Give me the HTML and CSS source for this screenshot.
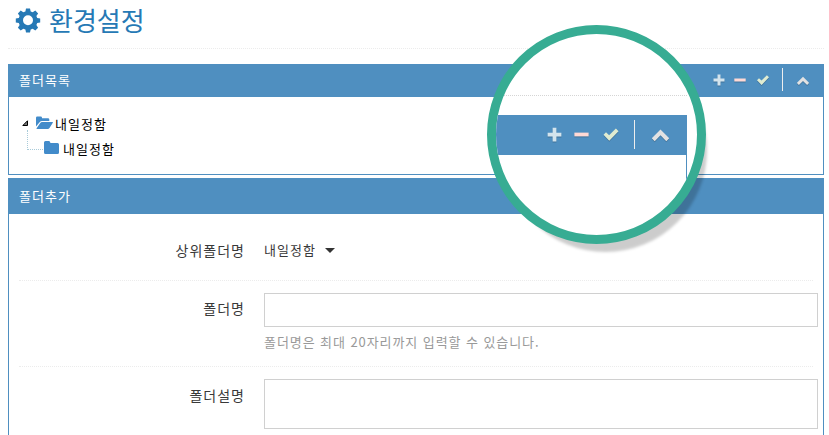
FILE: index.html
```html
<!DOCTYPE html>
<html lang="ko">
<head>
<meta charset="utf-8">
<title>환경설정</title>
<link rel="stylesheet" href="styles.css">
</head>
<body>
<svg class="defs" aria-hidden="true">
  <symbol id="plus" viewBox="0 0 12 12"><path d="M4.500 0.500h3v4h4v3h-4v4h-3v-4h-4v-3h4z"/></symbol>
  <symbol id="minus" viewBox="0 0 12 12"><path d="M0.300 4.500h11.400v3H0.300z"/></symbol>
  <symbol id="check" viewBox="0 0 12 12"><path d="M0 6.200l2-2 2.500 2.300L9.900 1.200 12 3.300 4.600 10.900z"/></symbol>
  <symbol id="up" viewBox="0 0 12 12"><path d="M6 1.700l6.200 6.200-2.100 2.100L6 5.900 1.900 10l-2.100-2.100z"/></symbol>
</svg>
<header class="title">
  <svg class="cog" viewBox="0 0 24 24"><path fill-rule="evenodd" d="M10 0.500h4l.7 3 2 .8 2.600-1.700 2.800 2.800-1.700 2.600.8 2 3 .6v3.800l-3 .7-.8 2 1.700 2.600-2.800 2.800-2.600-1.700-2 .8-.7 3h-4l-.6-3-2.100-.8-2.600 1.700-2.800-2.800 1.700-2.600-.8-2-3-.7v-3.800l3-.6.8-2-1.700-2.600 2.800-2.800 2.600 1.700 2.100-.8zM12 7.200a5 5 0 1 0 0 10 5 5 0 0 0 0-10z"/></svg>
  <h1>환경설정</h1>
</header>
<section class="panel list">
  <div class="bar">
    <h2>폴더목록</h2>
    <div class="tools">
      <svg class="plus"><use href="#plus"/></svg>
      <svg class="minus"><use href="#minus"/></svg>
      <svg class="check"><use href="#check"/></svg>
      <i class="sep"></i>
      <svg class="up"><use href="#up"/></svg>
    </div>
  </div>
  <div class="tree">
    <div class="node">
      <svg class="arrow" viewBox="0 0 6 6"><path d="M5.500.8v4.700H.8z"/></svg>
      <svg class="open" viewBox="0 0 17 14"><path d="M0 10.500V1.800Q0 .5 1.300.5h3.400Q6 .5 6 1.800v.4h6q1.300 0 1.300 1.300V5H6Q4.600 5 3.600 6.200z"/><path d="M6 6h10.500q.8 0 .3.800L13.500 12q-.6 1-1.800 1H1q-.9 0-.4-.8L4.300 7Q5 6 6 6z"/></svg>
      <span>내일정함</span>
    </div>
    <div class="node child">
      <i class="branch"></i>
      <svg class="folder" viewBox="0 0 15 13"><path d="M0 11.500V1.500Q0 0 1.500 0h3.300q1.500 0 1.500 1.500V2h7.200Q15 2 15 3.500v8q0 1.500-1.500 1.500h-12Q0 13 0 11.500z"/></svg>
      <span>내일정함</span>
    </div>
  </div>
</section>
<section class="panel add">
  <div class="bar"><h2>폴더추가</h2></div>
  <form class="form">
    <div class="row parent">
      <label>상위폴더명</label>
      <div class="select">내일정함<i class="caret"></i></div>
    </div>
    <div class="row name">
      <label>폴더명</label>
      <div class="field"><div class="input"></div><p>폴더명은 최대 20자리까지 입력할 수 있습니다.</p></div>
    </div>
    <div class="row desc">
      <label>폴더설명</label>
      <div class="field"><div class="input tall"></div></div>
    </div>
  </form>
</section>
<div class="lens">
  <div class="view">
    <div class="rule"></div>
    <div class="bar">
      <div class="tools">
        <svg class="plus"><use href="#plus"/></svg>
        <svg class="minus"><use href="#minus"/></svg>
        <svg class="check"><use href="#check"/></svg>
        <i class="sep"></i>
        <svg class="up"><use href="#up"/></svg>
      </div>
    </div>
    <div class="body"></div>
  </div>
</div>
</body>
</html>
```
FILE: styles.css
```css
* { box-sizing: border-box; }
html { overflow: hidden; }
body {
  margin: 0;
  padding: 0 5px 0 8px;
  height: 435px;
  overflow: hidden;
  position: relative;
  background: #fff;
  color: #000;
  font: 13px/18px "Noto Sans CJK KR", sans-serif;
  letter-spacing: 1px;
}
h1, h2, p { margin: 0; font-weight: 400; }
svg { display: block; flex: none; overflow: visible; }
.defs { position: absolute; width: 0; height: 0; }

.title {
  display: flex;
  height: 49px;
  padding: 8px 0 0 8px;
  border-bottom: 1px dotted #ececec;
  color: #2679b5;
}
.cog { width: 24px; height: 24px; fill: #2679b5; }
.title h1 { margin: -1px 0 0 9px; font-size: 26px; line-height: 26px; letter-spacing: 0; }

.panel { border: 1px solid #4f8fc0; border-top: 0; }
.list { height: 111px; margin-top: 15px; }
.add { height: 270px; margin-top: 3px; }
.bar {
  display: flex;
  justify-content: space-between;
  align-items: center;
  height: 33px;
  padding-left: 10px;
  background: #4f8fc0;
}
.add .bar { height: 36px; }
.bar h2 { padding-bottom: 1px; color: #fff; font-size: 13px; }

.tools { display: flex; align-items: center; }
.tools svg { width: 12px; height: 12px; filter: drop-shadow(0 1px 0 rgba(0, 0, 0, .2)); }
.plus { fill: #d3e4ed; }
.minus { fill: #ffd9d5; margin-left: 9px; }
.check { fill: #e0ecd1; margin-left: 11px; }
.sep { width: 1px; height: 23px; margin-left: 13px; background: #eee; }
.up { fill: #e2e2e2; margin-left: 14px; }
.list .tools { padding: 0 14px 2px 0; }
.list .up { margin-top: 3px; }

.tree { padding: 15px 0 0 13px; }
.node { display: flex; align-items: center; height: 25px; }
.node span { padding-bottom: 2px; }
.arrow { width: 6px; height: 6px; margin-bottom: 4px; stroke: #000; stroke-width: 1; fill: #777; }
.open { width: 17px; height: 14px; margin: 0 2px 4px 8px; fill: #428bca; }
.folder { width: 15px; height: 13px; margin: 0 4px 4px 0; fill: #428bca; }
.branch {
  width: 16px;
  height: 20px;
  margin: -20px 1px 0 5px;
  border: dotted #a9cbd9;
  border-width: 0 0 1px 1px;
}

.form { padding: 0 5px 0 10px; color: #393939; }
.row { display: flex; margin-right: 5px; }
.row + .row { border-top: 1px dotted #ececec; }
.row label { width: 226px; margin-right: 19px; text-align: right; font-size: 14px; }
.parent { height: 66px; padding-top: 27px; }
.name { height: 86px; padding-top: 12px; }
.desc { padding-top: 12px; }
.name label { padding-top: 6px; }
.desc label { padding-top: 7px; }
.select { display: flex; align-items: center; height: 18px; }
.caret {
  margin-left: 9px;
  border: 5px solid transparent;
  border-top-color: #333;
  border-bottom: 0;
}
.field { flex: 1; margin-right: -5px; }
.input { height: 34px; border: 1px solid #d0d0d0; background: #fff; }
.tall { height: 50px; }
.field p { margin-top: 6px; color: #999; letter-spacing: .92px; }

.lens {
  position: absolute;
  left: 487px;
  top: 25px;
  width: 219px;
  height: 219px;
  border: 9px solid #37ac93;
  border-radius: 50%;
  background: #fff;
  box-shadow: 9px 16px 3px -8px rgba(0, 0, 0, .2);
}
.view { height: 201px; overflow: hidden; border-radius: 50%; padding: 61px 10px 0 0; }
.rule { height: 1px; border-top: 1px dotted #d5d5d5; }
.lens .bar { height: 40px; margin-top: 19px; justify-content: flex-end; }
.lens .body { height: 80px; border-right: 1px solid #4f8fc0; }
.lens .tools { padding: 0 18px 2px 0; }
.lens svg { width: 15px; height: 15px; }
.lens .minus { margin-left: 12px; }
.lens .check { width: 16px; margin-left: 14px; }
.lens .sep { height: 29px; margin-left: 15px; }
.lens .up { width: 17px; height: 17px; margin: 2px 0 0 17px; }
```
